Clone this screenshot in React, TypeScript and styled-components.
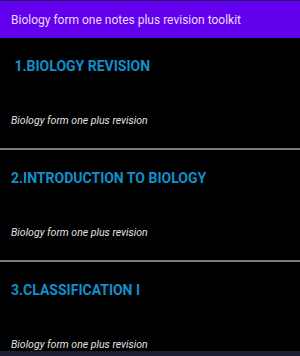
import React from "react";
import styled, { createGlobalStyle } from "styled-components";

const Global = createGlobalStyle`
  html, body { margin: 0; padding: 0; background: #000; }
  body { font-family: Roboto, "Noto Sans", "Liberation Sans", sans-serif; }
`;

const Page = styled.div`
  width: 300px;
  height: 356px;
  overflow: hidden;
  background: #000;
  position: relative;
  display: flex;
  flex-direction: column;
`;

const AppBar = styled.div`
  height: 37px;
  border-top: 1px solid #2a1260;
  background: #6200ee;
  display: flex;
  align-items: center;
  padding: 0 11px;
  color: #e6dcff;
  font-size: 12px;
  font-weight: 400;
  flex-shrink: 0;
`;

const List = styled.div`
  display: flex;
  flex-direction: column;
`;

const Item = styled.div`
  display: flex;
  flex-direction: column;
  padding: 18px 11px 20px 11px;
  height: 110px;
  box-sizing: border-box;
`;

const Title = styled.div`
  font-size: 14px;
  line-height: 20px;
  font-weight: 700;
  color: #1190cc;
  white-space: pre;
`;

const Subtitle = styled.div`
  margin-top: 38px;
  font-size: 10.5px;
  line-height: 14px;
  font-style: italic;
  color: #e2e2e2;
`;

const Divider = styled.div`
  height: 2px;
  background: #7a7a7a;
`;

const NavEdge = styled.div`
  position: absolute;
  left: 0;
  right: 0;
  bottom: 0;
  height: 5px;
  background: #1c1f33;
`;

const items = [" 1.BIOLOGY REVISION", "2.INTRODUCTION TO BIOLOGY", "3.CLASSIFICATION I"];

export default function App() {
  return (
    <Page>
      <Global />
      <AppBar>Biology form one notes plus revision toolkit</AppBar>
      <List>
        {items.map((t, i) => (
          <React.Fragment key={t}>
            <Item>
              <Title>{t}</Title>
              <Subtitle>Biology form one plus revision</Subtitle>
            </Item>
            {i < items.length - 1 && <Divider />}
          </React.Fragment>
        ))}
      </List>
      <NavEdge />
    </Page>
  );
}
